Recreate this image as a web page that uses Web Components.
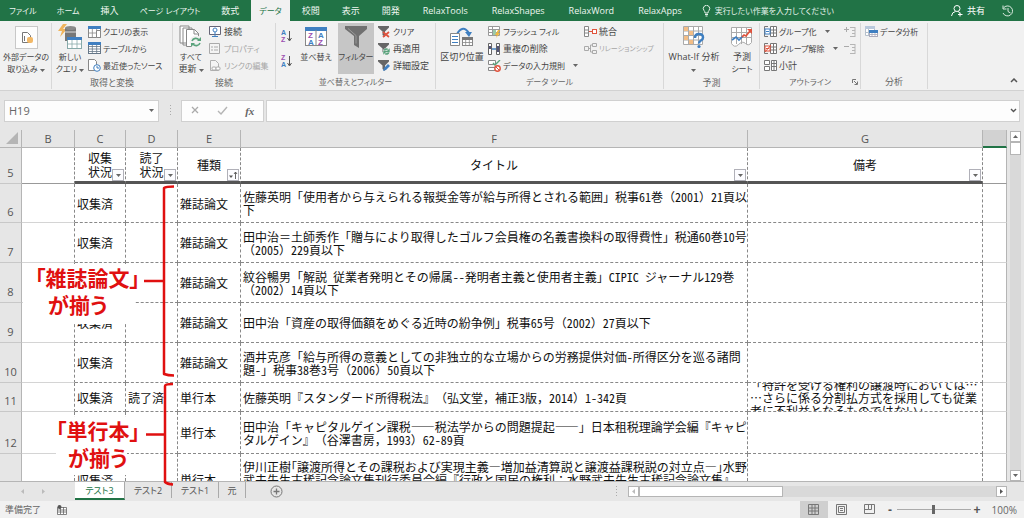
<!DOCTYPE html>
<html lang="ja">
<head>
<meta charset="utf-8">
<title>文献リスト</title>
<style>
html,body{margin:0;height:100%}
body{font-family:"Open Sans","Noto Sans CJK JP",sans-serif;font-size:9px;color:#444;background:#e6e6e6;overflow:hidden}
</style>
</head>
<body>
<book-app></book-app>
<script>
const define=(name,html,setup)=>{
  const t=document.createElement('template');
  t.innerHTML=html;
  customElements.define(name,class extends HTMLElement{
    constructor(){
      super();
      this.attachShadow({mode:'open'}).append(t.content.cloneNode(true));
    }
    connectedCallback(){ if(setup) setup(this,this.shadowRoot); }
  });
};

/* ---------- icons: [width, height, drawing] ---------- */
const G='#777', B='#3f7fc1', R='#e0533d', T='#5aa37c';
const grid=(x,y,w,h,c,head)=>`<rect x="${x+.5}" y="${y+.5}" width="${w-1}" height="${h-1}" fill="#fff" stroke="${c}"/><path d="M${x} ${y+h/2+1}h${w}M${x+w/3} ${y}v${h}M${x+2*w/3} ${y}v${h}" stroke="${c}" stroke-width=".8"/><rect x="${x}" y="${y}" width="${w}" height="3" fill="${head}"/>`;
const refresh=(x,y,r)=>`<g fill="none" stroke="${T}" stroke-width="1.6"><path d="M${x-r} ${y-1}A${r} ${r} 0 0 1 ${x+r-1} ${y-2}M${x+r} ${y+1}A${r} ${r} 0 0 1 ${x-r+1} ${y+2}"/></g><path d="M${x+r+1} ${y-r-1}v4h-4zM${x-r-1} ${y+r+1}v-4h4z" fill="${T}"/>`;
const funnel='<path d="M0 0h11v1.5L7 5.500V11L4.500 9V5.500L0 1.500z" fill="#666"/>';
const tx=(x,y,s,c,t)=>`<text x="${x}" y="${y}" font-size="${s}" fill="${c}" font-family="Liberation Sans,sans-serif" font-weight="bold">${t}</text>`;
const outl=c=>`<path d="M4 .5H.5v10H4" fill="none" stroke="${G}"/><path d="M6.500 .5h6v10h-6zM6 4h6.500M6 7h6.500M9.500 0v11" fill="#fff" stroke="${G}"/><rect x="1" y="3" width="5" height="5" fill="#fff" stroke="${c}"/><path d="M2 5.500h3" stroke="${c}"/>`;
const icons={
 ext:[23,23,`<rect x=".5" y=".5" width="22" height="22" fill="#fdfdfd" stroke="#c8c8c8"/><path d="M7.500 6.500h5l3 3v7h-8z" fill="#fff" stroke="${G}"/><path d="M9.500 10v5" stroke="${G}"/><rect x="12" y="11" width="6" height="6" rx="2" fill="#f2b866"/>`],
 newq:[26,26,`<path d="M6 0L1 7h4l-2 6 7-8H6l4-5z" fill="#f0b45c"/><path d="M8 4h11v13H8z" fill="#777"/><ellipse cx="13.500" cy="4" rx="5.500" ry="2" fill="#8a8a8a"/><path d="M8 8h11" stroke="#ddd"/>${grid(10,13,15,12,'#8aa','#3f7fc1')}`],
 refall:[24,24,`<path d="M1 1h9v17H1zM4 3h9v17H4z" fill="#fff" stroke="#888"/><path d="M7.500 4.500h8l4 4v13h-12z" fill="#fff" stroke="#888"/><path d="M15 4.500v4.500h5" fill="none" stroke="#888"/><circle cx="17" cy="17" r="6.500" fill="#f1f1f1"/>${refresh(17,17,4)}`],
 sort:[22,20,`<rect x=".5" y=".5" width="21" height="18" fill="#fff" stroke="#888"/><rect width="22" height="4" fill="${B}"/><path d="M11 3v16" stroke="#888"/>${tx(3,11,8,'#9b4fb0','Z')}${tx(3,18,8,B,'A')}${tx(13,11,8,B,'A')}${tx(13,18,8,'#9b4fb0','Z')}`],
 az:[11,14,`${tx(0,6,7,B,'A')}${tx(0,13,7,'#9b4fb0','Z')}<path d="M8.500 2v9M6.500 9l2 3 2-3" fill="none" stroke="#555"/>`],
 za:[11,14,`${tx(0,6,7,'#9b4fb0','Z')}${tx(0,13,7,B,'A')}<path d="M8.500 2v9M6.500 9l2 3 2-3" fill="none" stroke="#555"/>`],
 filter:[22,22,`<path d="M0 0h22v3l-8 7v12l-5-3v-9L0 3z" fill="#707070"/><path d="M3 2.500l8 7v8" fill="none" stroke="#999"/>`],
 clear:[12,12,funnel+`<path d="M5 6l6 5M11 6l-6 5" stroke="${R}" stroke-width="1.700"/>`],
 reapply:[12,12,funnel+`<circle cx="8.500" cy="8.500" r="3.500" fill="#f1f1f1"/>${refresh(8.5,8.5,2.2)}`],
 adv:[12,12,funnel+`<path d="M5 11l1-3 4-4 2 2-4 4z" fill="${B}"/>`],
 qshow:[13,12,grid(0,0,13,12,'#888',B)+`<path d="M8.500 4.500h4v7h-4z" fill="#fff" stroke="#888"/>`],
 tbl:[13,13,grid(0,0,13,12,'#678',B)+`<path d="M0 4.500h13M0 9.500h13" stroke="#678" stroke-width=".8"/>`],
 recent:[13,13,`<path d="M.5.5h6l2 2v9h-8z" fill="#fff" stroke="#888"/><circle cx="9" cy="9" r="3.300" fill="#fff" stroke="${B}"/><path d="M9 7v2h2" fill="none" stroke="${B}"/>`],
 conn:[12,11,`<path d="M.5.5h11v8H.5z" fill="#fff" stroke="#667"/><circle cx="6" cy="4" r="2" fill="#fff" stroke="${B}"/><path d="M3 10.500h6M6 6v4" stroke="${B}"/>`],
 prop:[11,11,`<path d="M.5.5h10v10H.5z" fill="#f4f4f4" stroke="#aaa"/><path d="M2 4h2M5 4h4M2 7h2M5 7h4" stroke="#aaa"/>`],
 link:[12,12,`<path d="M1.500.5h5l3 3v7h-8z" fill="#f4f4f4" stroke="#b0b0b0"/><rect x="3" y="7" width="4" height="3" rx="1" fill="#fff" stroke="#aaa"/><rect x="7" y="7" width="4" height="3" rx="1" fill="#fff" stroke="#aaa"/>`],
 split:[24,20,`<path d="M7 7Q13-3 19 6" fill="none" stroke="${B}" stroke-width="2"/><path d="M15 5h7l-3 5z" fill="${B}"/><path d="M.5 6.500h9v12h-9z" fill="#fff" stroke="#888"/><path d="M2 9.500h6M2 12.500h6M2 15.500h6" stroke="${B}"/>${grid(12,10,11,9,'#888','#777')}`],
 flash:[13,12,`<path d="M.5.5h11v9H.5zM.5 3.500h11M.5 6.500h11M4.500 0v9" fill="#fff" stroke="#999"/><rect x="5" y="4" width="3" height="5" fill="#9cc9a9"/><path d="M10 4L7 9h2l-1 3 4-5h-2l2-3z" fill="#f0b840"/>`],
 dup:[12,12,`<path d="M.5.5h3v11h-3zM8.500.5h3v11h-3z" fill="#fff" stroke="#666"/><path d="M1 3h2v3H1zM9 3h2v6H9z" fill="#557"/><path d="M4 6h4" stroke="${B}" stroke-width="1.500"/>`],
 valid:[13,12,`<path d="M.5.5h7v4h-7zM.5 7.500h7v3h-7z" fill="#fff" stroke="#888"/><path d="M5 3l2 2 5-5" fill="none" stroke="${T}" stroke-width="1.400"/><circle cx="9.500" cy="8.500" r="2.700" fill="#fff" stroke="${R}" stroke-width="1.400"/><path d="M8 7l3 3" stroke="${R}"/>`],
 cons:[13,11,`<path d="M.5.500h4v10h-4zM.5 4h4M.5 7h4" fill="#fff" stroke="#888"/><path d="M5 5.500h3" stroke="${R}"/><rect x="8.500" y="3.500" width="4" height="4" fill="#fff" stroke="${R}"/>`],
 rel:[13,11,`<path d="M.5 3.500h4v4h-4zM8.500.5h4v3h-4zM8.500 7.500h4v3h-4zM4 5.500h2.500M8 2H6.500v7H8" fill="none" stroke="#aaa"/>`],
 whatif:[23,23,`<path d="M.5.5h19v18H.5zM.5 5h19M.5 9.500h19M.5 14h19M5.500 0v19M10.500 0v19M15.500 0v19" fill="#fff" stroke="#aaa"/><path d="M1 1h4v4H1zM6 5h4v4H6zM1 10h4v4H1zM6 14h4v4H6z" fill="#f3bd85"/><path d="M12 12q0-4 4-4t4 3.500q0 2-2 3t-2 3" fill="none" stroke="${B}" stroke-width="2.500"/><circle cx="16" cy="20.500" r="1.600" fill="${B}"/>`],
 fsheet:[22,20,`<path d="M.5.5h20v15q-3 4-6 1t-7 1-7-1zM.5 5.500h20M.5 10.500h20M5.500 0v17M10.500 0v17M15.500 0v17" fill="#fff" stroke="#aaa"/><path d="M1 13l4-3 3 3 4-4" fill="none" stroke="${B}" stroke-width="1.700"/><path d="M11 10l2-2 2 1 4-5" fill="none" stroke="${R}" stroke-width="1.700"/><path d="M16 2h5v5z" fill="${R}"/>`],
 grp:[13,11,outl(B)], ungrp:[13,11,outl(R)+`<path d="M1 9l6-7" stroke="${R}"/>`],
 sub:[13,12,`<path d="M.5 .5h5v4h-5zM.5 6.500h5v4h-5zM7.500.5h5v10h-5zM7 3.500h5M7 6.500h5M10 0v11" fill="#fff" stroke="#777"/>`],
 plusd:[12,10,`<path d="M0 2.500h5M2.500 0v5" stroke="#aaa"/><path d="M6 .5h5M8 3.500h3M8 6.500h3M6 9.500h5M11 0v10" fill="none" stroke="#b5b5b5"/>`],
 minusd:[12,10,`<path d="M0 2.500h5" stroke="#aaa"/><path d="M6 .5h5M8 3.500h3M8 6.500h3M6 9.500h5M11 0v10" fill="none" stroke="#b5b5b5"/>`],
 danal:[13,12,`<path d="M.5.5h9v9h-9zM.5 6.500h9M3.500 3v6" fill="#fff" stroke="#b5c0cc"/><rect width="10" height="3" fill="#b9c9dc"/>${grid(4,4,9,7,'#aab',B)}`],
 launch:[6,6,`<path d="M.5 4V.5H4" fill="none" stroke="#777"/><path d="M2 2l3 3M5.500 2.500v3h-3" fill="none" stroke="#777"/>`],
 up:[8,5,`<path d="M1 4l3-3 3 3" fill="none" stroke="#555" stroke-width="1.500"/>`],
 down:[7,5,`<path d="M1 1l2.500 2.500L6 1" fill="none" stroke="#555" stroke-width="1.400"/>`],
 tri:[5,3,`<path d="M0 0h5L2.500 3z" fill="#666"/>`],
 triu:[5,3,`<path d="M0 3h5L2.500 0z" fill="#666"/>`],
 tril:[3,5,`<path d="M3 0v5L0 2.500z" fill="#bbb"/>`],
 trir:[3,5,`<path d="M0 0v5l3-2.500z" fill="currentColor"/>`],
 sorted:[9,8,`<path d="M0 4.500h4L2 7z" fill="#555"/><path d="M6.500 8V1M5 3l1.500-2L8 3" fill="none" stroke="#555" stroke-width=".9"/>`],
 bulb:[9,12,`<path d="M3 8q0-1.500-1-2.500a3.200 3.200 0 1 1 5 0Q6 6.500 6 8zM3 9.500h3M3.500 11h2" fill="none" stroke="#e6f2ea"/>`],
 person:[12,12,`<circle cx="6" cy="3.500" r="3" fill="none" stroke="#fff"/><path d="M.5 11q.5-4 4-4.500M7 6.500q2 1 2 2M9 7.500v4M7 9.500h4.500" fill="none" stroke="#fff"/>`],
 clock:[13,12,`<path d="M2.500 3a5 5 0 1 1-.5 5M2 .5V4h3.500M7 3v3.500l2.500 1.500" fill="none" stroke="#dcebe1"/>`],
 cross:[9,9,`<path d="M1 1l6 6M7 1L1 7" stroke="#aaa" stroke-width="1.300"/>`],
 check:[11,9,`<path d="M1 5l3 3 6-7" fill="none" stroke="#b5b5b5" stroke-width="1.400"/>`],
 dots:[3,11,`<path d="M1.500 0v11" stroke="#aaa" stroke-dasharray="1 2"/>`],
 add:[13,13,`<circle cx="6.500" cy="6.500" r="5.500" fill="none" stroke="#777"/><path d="M3.500 6.500h6M6.500 3.500v6" stroke="#777" stroke-width="1.300"/>`],
 macro:[10,10,`<path d="M.5 2.500h9v7h-9zM.5 5h9M.5 7h9M3.500 2v7M6.500 2v7" fill="#fff" stroke="#666" stroke-width=".8"/><circle cx="2.500" cy="2" r="2" fill="#555"/>`],
 vnorm:[11,11,`<path d="M.5.5h10v10H.5zM.5 4h10M.5 7h10M4 0v11M7 0v11" fill="none" stroke="#777"/>`],
 vpage:[11,11,`<path d="M.5.5h10v10H.5zM2.500 2.500h6v6h-6zM4 4.500h3M4 6.500h3" fill="none" stroke="#777"/>`],
 vbreak:[11,11,`<path d="M.5.500h10v9H.5zM4.500 0v5.500h-4M7.500 0v5.500h-3" fill="none" stroke="#777"/>`],
 corner:[13,13,`<path d="M12 0v12H0z" fill="#b5b5b5"/>`]
};
define('x-icon','<style>:host{display:inline-flex;flex:none}svg{display:block}</style>',(el,root)=>{
  const [w,h,d]=icons[el.getAttribute('name')];
  const t=document.createElement('template');
  t.innerHTML=`<svg width="${w}" height="${h}" viewBox="0 0 ${w} ${h}" fill="none" aria-hidden="true">${d}</svg>`;
  root.append(t.content);
});

/* ---------- ribbon ---------- */
define('ribbon-tab',`<style>
:host{display:flex;flex:none}
a{display:flex;align-items:center;padding:0 11px;color:#eef6f0;text-decoration:none;white-space:nowrap;font-size:9px;font-feature-settings:"palt"}
:host([kana]) a{font-size:8px;padding:0 10px}
:host([latin]) a{padding:0 12px}
:host([active]){margin:0 1px}
:host([active]) a{background:#f1f1f1;color:#217346;padding:0 8px}
</style><a href="#"><slot></slot></a>`);

define('top-tabs',`<style>
:host{display:flex;height:21px;background:#217346;color:#fff;font-feature-settings:"palt";font-size:9px}
nav{display:flex;flex:none}
.grow{flex:1}
.tail{display:flex;gap:16px;padding-right:10px}
button{display:flex;align-items:center;gap:4px;border:0;background:none;padding:0;margin:0;color:#fff;font:inherit;font-feature-settings:inherit;white-space:nowrap}
.tell{margin-left:8px;color:#e6f2ea;font-size:8px}
ribbon-tab:first-child{margin-left:-1px}
</style>
<nav><ribbon-tab kana>ファイル</ribbon-tab><ribbon-tab kana>ホーム</ribbon-tab><ribbon-tab>挿入</ribbon-tab><ribbon-tab kana>ページ レイアウト</ribbon-tab><ribbon-tab>数式</ribbon-tab><ribbon-tab active kana>データ</ribbon-tab><ribbon-tab>校閲</ribbon-tab><ribbon-tab>表示</ribbon-tab><ribbon-tab>開発</ribbon-tab><ribbon-tab latin>RelaxTools</ribbon-tab><ribbon-tab latin>RelaxShapes</ribbon-tab><ribbon-tab latin>RelaxWord</ribbon-tab><ribbon-tab latin>RelaxApps</ribbon-tab></nav>
<button class="tell"><x-icon name="bulb"></x-icon>実行したい作業を入力してください</button>
<span class="grow"></span>
<div class="tail"><button><x-icon name="person"></x-icon>共有</button><button aria-label="履歴"><x-icon name="clock"></x-icon></button></div>`);

define('big-button',`<style>
:host{display:flex;flex:none;justify-content:center}
button{width:100%;display:flex;flex-direction:column;align-items:center;border:0;background:none;padding:0;margin:0;font:inherit;font-size:8px;line-height:12px;color:#444;white-space:nowrap;font-feature-settings:"palt"}
.pic{height:28px;display:flex;align-items:center;justify-content:center}
:host([on]) button{background:#c6c6c6}
</style><button><span class="pic"><slot name="icon"></slot></span><span><slot></slot></span></button>`);

define('small-button',`<style>
:host{display:flex;flex:none;height:17px}
button{display:flex;align-items:center;border:0;background:none;padding:0;margin:0;font:inherit;font-size:8px;line-height:12px;color:#444;white-space:nowrap;font-feature-settings:"palt"}
.pic{width:15px;display:flex}
.dd{margin-left:8px}
:host(:not([menu])) .dd{display:none}
:host([off]) button{color:#a6a6a6}
</style><button><span class="pic"><slot name="icon"></slot></span><slot></slot><x-icon class="dd" name="tri"></x-icon></button>`,(el,root)=>{
  root.querySelector('button').disabled=el.hasAttribute('off');
});

define('ribbon-group',`<style>
:host{display:flex;flex-direction:column;flex:none;box-sizing:border-box;border-right:1px solid #d8d8d8;height:66px;margin-top:2px}
.body{display:flex;height:53px}
footer{display:flex;align-items:center;justify-content:center;height:16px;color:#666;font-size:8px;white-space:nowrap;font-feature-settings:"palt";position:relative}
::slotted([slot=corner]){position:absolute;right:2px;top:5px}
</style><div class="body"><slot></slot></div><footer><span><slot name="label"></slot></span><slot name="corner"></slot></footer>`);

define('data-ribbon',`<style>
:host{display:flex;height:70px;background:#f1f1f1;border-bottom:1px solid #d2d2d2;box-sizing:border-box}
.stack{display:flex;flex-direction:column;flex:none}
.az{display:flex;flex-direction:column;justify-content:space-around;width:17px;padding-left:5px}
.az button{border:0;background:none;padding:0;display:flex}
.g1{width:52px}.g2{width:121px}.g3{width:103px}.g4{width:160px}.g5{width:228px}.g6{width:96px}.g7{width:101px}.g8{width:67px}
.w36{width:36px}.w52{width:52px}.w60{width:60px}
.gap{margin-right:4px}
.s2{width:96px}
.pad{padding-left:4px}
.mini{margin-left:auto;padding-right:4px}
.mini button{border:0;background:none;padding:0;height:17px;display:flex;align-items:center}
.kj{font-size:9px}
.s{font-size:7px}
.end{margin-left:auto;align-self:flex-end;border:0;background:none;padding:4px 6px}
</style>
<ribbon-group class="g1"><big-button class="w52"><x-icon slot="icon" name="ext"></x-icon>外部データの<br>取り込み <x-icon name="tri"></x-icon></big-button></ribbon-group>
<ribbon-group class="g2"><big-button class="w36"><x-icon slot="icon" name="newq"></x-icon>新しい<br>クエリ <x-icon name="tri"></x-icon></big-button>
<div class="stack"><small-button><x-icon slot="icon" name="qshow"></x-icon>クエリの表示</small-button><small-button><x-icon slot="icon" name="tbl"></x-icon>テーブルから</small-button><small-button><x-icon slot="icon" name="recent"></x-icon>最近使ったソース</small-button></div><span slot="label" class="kj">取得と変換</span></ribbon-group>
<ribbon-group class="g3"><big-button class="w36"><x-icon slot="icon" name="refall"></x-icon>すべて<br><span class="kj">更新</span> <x-icon name="tri"></x-icon></big-button>
<div class="stack"><small-button><x-icon slot="icon" name="conn"></x-icon><span class="kj">接続</span></small-button><small-button off><x-icon slot="icon" name="prop"></x-icon>プロパティ</small-button><small-button off><x-icon slot="icon" name="link"></x-icon>リンクの編集</small-button></div><span slot="label" class="kj">接続</span></ribbon-group>
<ribbon-group class="g4"><div class="az"><button aria-label="昇順"><x-icon name="az"></x-icon></button><button aria-label="降順"><x-icon name="za"></x-icon></button></div>
<big-button class="w36 gap"><x-icon slot="icon" name="sort"></x-icon>並べ替え</big-button><big-button on class="w36 gap"><x-icon slot="icon" name="filter"></x-icon>フィルター</big-button>
<div class="stack"><small-button><x-icon slot="icon" name="clear"></x-icon>クリア</small-button><small-button><x-icon slot="icon" name="reapply"></x-icon><span class="kj">再適用</span></small-button><small-button><x-icon slot="icon" name="adv"></x-icon><span class="kj">詳細設定</span></small-button></div><span slot="label">並べ替えとフィルター</span></ribbon-group>
<ribbon-group class="g5"><big-button class="w52"><x-icon slot="icon" name="split"></x-icon><span class="kj">区切り位置</span></big-button>
<div class="stack s2"><small-button><x-icon slot="icon" name="flash"></x-icon>フラッシュ フィル</small-button><small-button><x-icon slot="icon" name="dup"></x-icon><span class="kj">重複の削除</span></small-button><small-button menu><x-icon slot="icon" name="valid"></x-icon>データの入力規則</small-button></div>
<div class="stack"><small-button><x-icon slot="icon" name="cons"></x-icon><span class="kj">統合</span></small-button><small-button off><x-icon slot="icon" name="rel"></x-icon><span class="s">リレーションシップ</span></small-button></div><span slot="label">データ ツール</span></ribbon-group>
<ribbon-group class="g6"><big-button class="w60"><x-icon slot="icon" name="whatif"></x-icon><span class="kj">What-If 分析</span><br><x-icon name="tri"></x-icon></big-button><big-button class="w36"><x-icon slot="icon" name="fsheet"></x-icon><span class="kj">予測</span><br>シート</big-button><span slot="label" class="kj">予測</span></ribbon-group>
<ribbon-group class="g7"><div class="stack pad"><small-button menu><x-icon slot="icon" name="grp"></x-icon>グループ化</small-button><small-button menu><x-icon slot="icon" name="ungrp"></x-icon>グループ解除</small-button><small-button><x-icon slot="icon" name="sub"></x-icon><span class="kj">小計</span></small-button></div>
<div class="mini"><button disabled aria-label="詳細を表示"><x-icon name="plusd"></x-icon></button><button disabled aria-label="詳細を非表示"><x-icon name="minusd"></x-icon></button></div><span slot="label">アウトライン</span><x-icon slot="corner" name="launch"></x-icon></ribbon-group>
<ribbon-group class="g8"><div class="stack pad"><small-button><x-icon slot="icon" name="danal"></x-icon>データ分析</small-button></div><span slot="label" class="kj">分析</span></ribbon-group>
<button class="end" aria-label="リボンを折りたたむ"><x-icon name="up"></x-icon></button>`);

/* ---------- formula bar ---------- */
define('formula-bar',`<style>
:host{display:flex;align-items:center;height:39px;box-sizing:border-box;padding:0 4px}
.box{display:flex;align-items:center;height:22px;box-sizing:border-box;background:#fdfdfd;border:1px solid #d0d0d0}
.name{width:155px;padding:0 4px}
input{border:0;background:none;outline:0;padding:0;min-width:0;flex:1;font:11px "Open Sans",sans-serif;color:#666}
.dots{width:22px;display:flex;justify-content:center}
.btns{width:83px;justify-content:space-around;margin-right:2px}
.btns button,.f button{border:0;background:none;padding:0;display:flex}
.btns .fx{font:italic bold 11px "Liberation Serif",serif;color:#666}
.f{flex:1;padding:0 2px 0 4px}
</style>
<div class="box name"><input aria-label="名前ボックス" value="H19"><x-icon name="tri"></x-icon></div>
<span class="dots"><x-icon name="dots"></x-icon></span>
<div class="box btns"><button aria-label="キャンセル"><x-icon name="cross"></x-icon></button><button aria-label="入力"><x-icon name="check"></x-icon></button><button class="fx" aria-label="関数の挿入">fx</button></div>
<div class="box f"><input aria-label="数式バー"><button aria-label="展開"><x-icon name="down"></x-icon></button></div>`);

/* ---------- sheet ---------- */
define('filter-button',`<style>
:host{display:block;position:absolute;right:1px;bottom:0}
button{width:12px;height:12px;box-sizing:border-box;padding:0;border:1px solid #b0b0b8;background:#fcfcff;display:flex;align-items:center;justify-content:center}
</style><button aria-label="フィルター"><slot><x-icon name="tri"></x-icon></slot></button>`);

define('sheet-grid',`<style>
:host{display:block;flex:1;min-width:0;overflow:hidden;background:#fff}
table{width:100%;border-collapse:separate;border-spacing:0;table-layout:fixed;color:#111;font:12px/13px "Noto Sans CJK JP",sans-serif;text-spacing-trim:space-all}
.hw{font-feature-settings:"hwid"}
.h{width:22px}.b{width:53px}.c{width:51px}.d{width:52px}.e{width:63px}.g{width:235px}.i{width:24px}
th,td{padding:0;box-sizing:border-box;font-weight:400;text-align:left;position:relative;white-space:nowrap}
thead th{height:18px;background:#e6e6e6;color:#555;font:11px/16px "Open Sans",sans-serif;text-align:center;border-right:1px solid #b5b5b5;border-bottom:1px solid #b5b5b5}
thead th:first-child x-icon{position:absolute;right:2px;bottom:2px}
thead th:last-child{background:#d2d2d2;border-bottom:2px solid #217346}
tbody th{background:#e6e6e6;color:#555;font:11px/13px "Open Sans",sans-serif;text-align:center;vertical-align:bottom;padding-bottom:4px;border-right:1px solid #b5b5b5;border-bottom:1px solid #c8c8c8}
td{border-right:1px dashed #888;border-bottom:1px dashed #888;padding-left:2px}
td:last-child{border-right:1px solid #b5b5b5}
td:nth-child(2),td:last-child{border-bottom:1px solid #d4d4d4}
.head td{text-align:center;padding:0;line-height:14px}
.head td:nth-child(n+3):not(:last-child){border-bottom:3px solid #555}
.head td:nth-child(2),.head td:last-child{border-bottom-color:#999}
.r5{height:36px}.r{height:40px}.r8{height:39px}.r11{height:29px}.r12{height:42px}.r13{height:51px}
.clip{display:flex;align-items:center;height:28px;overflow:hidden}
.three{height:39px}
</style>
<table><colgroup><col class="h"><col class="b"><col class="c"><col class="d"><col class="e"><col><col class="g"><col class="i"></colgroup>
<thead><tr><th><x-icon name="corner"></x-icon></th><th>B</th><th>C</th><th>D</th><th>E</th><th>F</th><th>G</th><th></th></tr></thead>
<tbody>
<tr class="head r5"><th>5</th><td></td><td>収集<br>状況<filter-button></filter-button></td><td>読了<br>状況<filter-button></filter-button></td><td>種類<filter-button><x-icon name="sorted"></x-icon></filter-button></td><td>タイトル<filter-button></filter-button></td><td>備考<filter-button></filter-button></td><td></td></tr>
<tr class="r r8"><th>6</th><td></td><td>収集済</td><td></td><td>雑誌論文</td><td>佐藤英明「使用者から与えられる報奨金等が給与所得とされる範囲」税事61巻（2001）21頁以<br>下</td><td></td><td></td></tr>
<tr class="r"><th>7</th><td></td><td>収集済</td><td></td><td>雑誌論文</td><td>田中治＝土師秀作「贈与により取得したゴルフ会員権の名義書換料の取得費性」税通60巻10号<br>（2005）229頁以下</td><td></td><td></td></tr>
<tr class="r"><th>8</th><td></td><td></td><td></td><td>雑誌論文</td><td>紋谷暢男「解説 従業者発明とその帰属--発明者主義と使用者主義」CIPIC ジャーナル129巻<br>（2002）14頁以下</td><td></td><td></td></tr>
<tr class="r"><th>9</th><td></td><td>収集済</td><td></td><td>雑誌論文</td><td>田中治「資産の取得価額をめぐる近時の紛争例」税事65号（2002）27頁以下</td><td></td><td></td></tr>
<tr class="r"><th>10</th><td></td><td>収集済</td><td></td><td>雑誌論文</td><td>酒井克彦「給与所得の意義としての非独立的な立場からの労務提供対価-所得区分を巡る諸問<br>題-」税事38巻3号（2006）50頁以下</td><td></td><td></td></tr>
<tr class="r11"><th>11</th><td></td><td>収集済</td><td>読了済</td><td>単行本</td><td>佐藤英明『スタンダード所得税法』（弘文堂，補正3版，2014）1-342頁</td><td><div class="clip"><span>「特許を受ける権利の譲渡時においては…<br>…さらに係る分割払方式を採用しても従業<br>者に不利益となるものではない」</span></div></td><td></td></tr>
<tr class="r12"><th>12</th><td></td><td></td><td></td><td>単行本</td><td>田中治「キャピタルゲイン課税――税法学からの問題提起――」日本租税理論学会編『キャピ<br>タルゲイン』（谷澤書房，1993）62-89頁</td><td></td><td></td></tr>
<tr class="r13"><th></th><td></td><td>収集済</td><td></td><td>単行本</td><td><div class="three">伊川正樹｢譲渡所得とその課税および実現主義―増加益清算説と譲渡益課税説の対立点―｣水野<br>武夫先生古稀記念論文集刊行委員会編『行政と国民の権利：水野武夫先生古稀記念論文集』</div></td><td></td><td></td></tr>
</tbody></table>`,(el,root)=>{
  /* Latin letters and digits take half the width of a kanji */
  const w=document.createTreeWalker(root.querySelector('tbody'),NodeFilter.SHOW_TEXT), nodes=[];
  while(w.nextNode()) if(w.currentNode.parentElement.closest('td')&&/[!-~]/.test(w.currentNode.data)) nodes.push(w.currentNode);
  for(const n of nodes){
    const t=document.createElement('template');
    t.innerHTML=n.data.replace(/[ -~]+/g,m=>`<span class="hw">${m}</span>`);
    n.replaceWith(t.content);
  }
});

define('scroll-bar',`<style>
:host{display:flex;flex-direction:column;width:11px;background:#d9d9d9}
:host([horizontal]){flex-direction:row;width:auto;height:11px}
button{flex:none;display:flex;align-items:center;justify-content:center;width:11px;height:11px;box-sizing:border-box;padding:0;border:1px solid #b5b5b5;background:#fff;color:#555}
.thumb{flex:none;height:13px;background:#fff;border:1px solid #b5b5b5;box-sizing:border-box}
:host([horizontal]) .thumb{width:38%;height:11px}
.grow{flex:1}
</style><button aria-label="前へ"><slot name="a"></slot></button><span class="thumb"></span><span class="grow"></span><button aria-label="次へ"><slot name="b"></slot></button>`);

define('sheet-tabs',`<style>
:host{display:flex;align-items:center;height:20px;border-top:1px solid #b5b5b5;box-sizing:border-box;padding-right:17px;background:#e6e6e6}
.nav{display:flex;gap:18px;justify-content:center;width:66px;padding-right:9px;color:#bbb}
nav{display:flex;height:100%;align-items:flex-start}
a{display:flex;align-items:center;justify-content:center;box-sizing:border-box;height:16px;width:47px;border-right:1px solid #aaa;color:#555;text-decoration:none;font-size:9px;font-feature-settings:"palt"}
a.on{width:50px;height:18px;background:#fff;color:#217346;border-bottom:2px solid #217346}
a.s{width:27px}
.add{border:0;background:none;padding:0;margin-left:24px;display:flex}
.split{margin-left:auto;margin-right:10px}
scroll-bar{flex:0 1 379px}
</style>
<div class="nav"><x-icon name="tril"></x-icon><x-icon name="trir"></x-icon></div>
<nav><a class="on" href="#">テスト3</a><a href="#">テスト2</a><a href="#">テスト1</a><a class="s" href="#">元</a></nav>
<button class="add" aria-label="新しいシート"><x-icon name="add"></x-icon></button>
<x-icon class="split" name="dots"></x-icon>
<scroll-bar horizontal><x-icon slot="a" name="tril"></x-icon><x-icon slot="b" name="trir"></x-icon></scroll-bar>`);

define('status-bar',`<style>
:host{display:flex;align-items:center;height:17px;background:#f1f1f1;padding:0 7px 0 5px;color:#666}
.t{margin-right:16px}
.views{display:flex;margin-left:auto;height:100%}
.views button{width:28px;border:0;padding:0;background:none;display:flex;align-items:center;justify-content:center}
.views .on{background:#cfcfcf}
.z{border:0;background:none;padding:0;width:13px;color:#555;font:bold 12px/12px "Liberation Sans",sans-serif}
input{appearance:none;width:74px;height:10px;margin:0;background:linear-gradient(#aaa,#aaa) center/100% 1px no-repeat}
input::-webkit-slider-thumb{appearance:none;width:3px;height:9px;background:#666}
output{font-size:10px;margin-left:8px}
</style>
<span class="t">準備完了</span><x-icon name="macro"></x-icon>
<div class="views"><button class="on" aria-label="標準"><x-icon name="vnorm"></x-icon></button><button aria-label="ページ レイアウト"><x-icon name="vpage"></x-icon></button><button aria-label="改ページ プレビュー"><x-icon name="vbreak"></x-icon></button></div>
<button class="z" aria-label="縮小">-</button><input type="range" aria-label="ズーム" value="50"><button class="z" aria-label="拡大">+</button><output>100%</output>`);

/* ---------- red callouts laid over the sheet ---------- */
define('note-callout',`<style>
:host{position:absolute;box-sizing:border-box;background:#fff;color:#e01010;font:bold 21px/27px "Noto Sans CJK JP",sans-serif;font-feature-settings:"palt";white-space:nowrap}
::slotted(span){display:block}
</style><slot></slot>`);

define('book-app',`<style>
:host{display:flex;flex-direction:column;height:100vh;position:relative;overflow:hidden}
main{display:flex;flex:1;min-height:0}
scroll-bar{margin:1px 3px 0 3px}
.one{left:23px;top:264px;width:112px;height:60px}
.two{left:56px;top:417px;width:71px;height:58px}
.l1{padding-left:12px}.l2{padding-left:25px}
.two .l1{padding-left:0}.two .l2{padding-left:12px}
.marks{position:absolute;left:0;top:0;pointer-events:none}
</style>
<top-tabs></top-tabs><data-ribbon></data-ribbon><formula-bar></formula-bar>
<main><sheet-grid></sheet-grid><scroll-bar><x-icon slot="a" name="triu"></x-icon><x-icon slot="b" name="tri"></x-icon></scroll-bar></main>
<sheet-tabs></sheet-tabs><status-bar></status-bar>
<note-callout class="one"><span class="l1">「雑誌論文」</span><span class="l2">が揃う</span></note-callout>
<note-callout class="two"><span class="l1">「単行本」</span><span class="l2">が揃う</span></note-callout>
<svg class="marks" width="180" height="490" fill="none" stroke="#e01010" stroke-width="2.500" stroke-linejoin="round"><path d="M174 186.500q-8 0-10 1.500V374q4 1.500 10 1.500M144 281h20M173 384q-8 0-8 2V482q2 2 8 2.500M146 434.500h19"/></svg>`);
</script>
</body>
</html>
